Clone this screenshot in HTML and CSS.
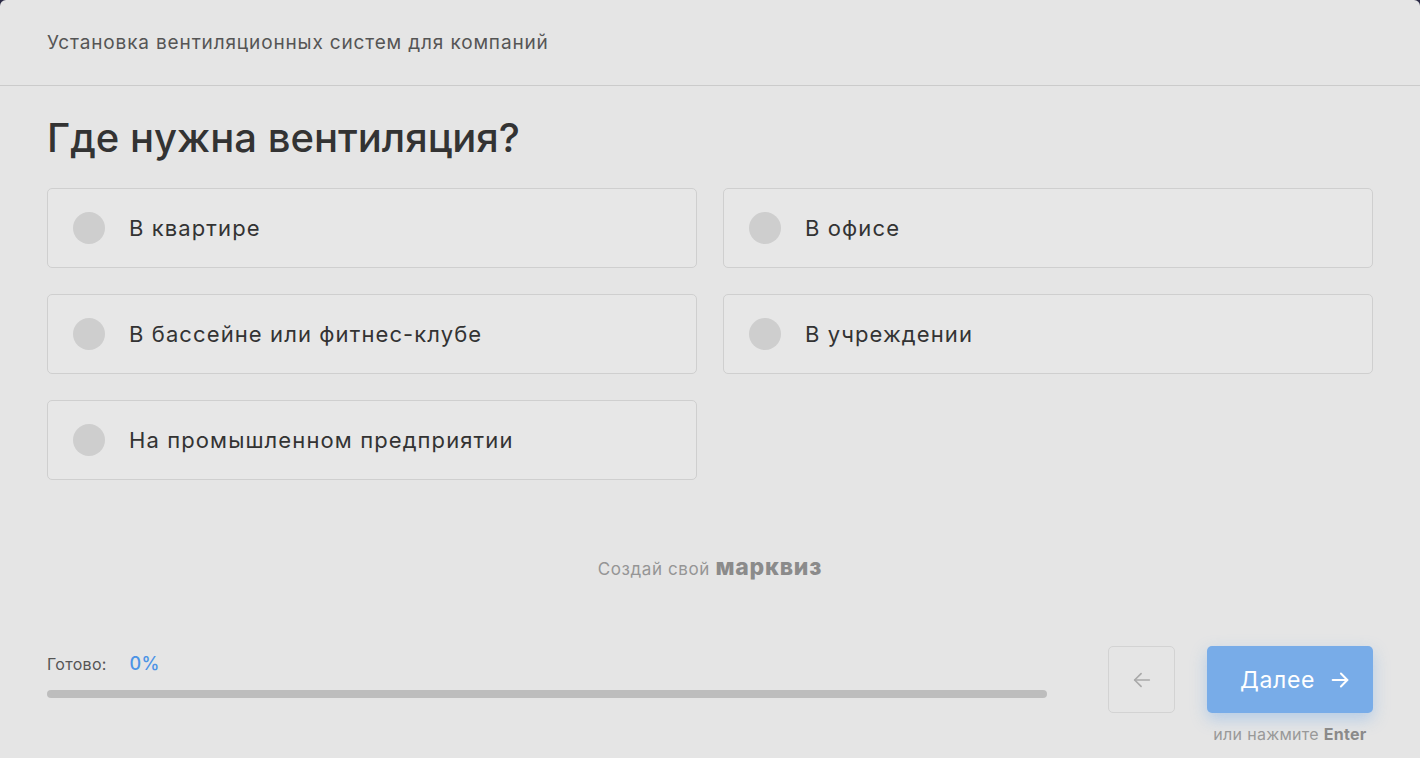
FILE: index.html
```html
<!DOCTYPE html>
<html lang="ru">
<head>
<meta charset="utf-8">
<title>Марквиз</title>
<link rel="stylesheet" href="styles.css">
</head>
<body>
<div class="quiz">
  <div class="quiz-head">Установка вентиляционных систем для компаний</div>

  <div class="quiz-body">
    <h1 class="quiz-title">Где нужна вентиляция?</h1>
    <div class="options">
      <label class="option"><span class="radio"></span>В квартире</label>
      <label class="option"><span class="radio"></span>В офисе</label>
      <label class="option"><span class="radio"></span>В бассейне или фитнес-клубе</label>
      <label class="option"><span class="radio"></span>В учреждении</label>
      <label class="option"><span class="radio"></span>На промышленном предприятии</label>
    </div>
  </div>

  <div class="brand">Создай свой <b>марквиз</b></div>

  <div class="quiz-foot">
    <div class="progress">
      <div class="progress-label">Готово: <span class="progress-value">0%</span></div>
      <div class="progress-bar"></div>
    </div>
    <div class="nav">
      <button class="btn-back">
        <svg width="22" height="22" viewBox="0 0 24 24" fill="none" stroke="#a9a9a9" stroke-width="1.8" stroke-linecap="round" stroke-linejoin="round"><path d="M20 12H4"/><path d="M11 5l-7 7 7 7"/></svg>
      </button>
      <div class="next-wrap">
        <button class="btn-next">Далее
          <svg width="22" height="22" viewBox="0 0 24 24" fill="none" stroke="#fff" stroke-width="2.2" stroke-linecap="round" stroke-linejoin="round"><path d="M4 12h16"/><path d="M13 5l7 7-7 7"/></svg>
        </button>
        <div class="hint">или нажмите <b>Enter</b></div>
      </div>
    </div>
  </div>
</div>
</body>
</html>
```

FILE: styles.css
```css
* {
  box-sizing: border-box;
  margin: 0;
  padding: 0;
}

body {
  background-color: #2b2a45;
  font-family: "Inter", "Noto Sans", sans-serif;
  color: #333;
}

.quiz {
  height: 100vh;
  background-color: #e5e5e5;
  border-radius: 6px 6px 0 0;
  display: flex;
  flex-direction: column;
}

.quiz-head {
  height: 86px;
  padding: 0 47px;
  display: flex;
  align-items: center;
  border-bottom: 1px solid #cbcbcb;
  font-size: 19px;
  letter-spacing: 0.85px;
  color: #555;
}

.quiz-body {
  padding: 27px 47px 0;
}

.quiz-title {
  font-size: 40px;
  font-weight: 500;
  line-height: 50px;
  color: #333;
}

.options {
  display: grid;
  grid-template-columns: 650px 650px;
  grid-auto-rows: 80px;
  column-gap: 26px;
  row-gap: 26px;
  margin-top: 25px;
}

.option {
  display: flex;
  align-items: center;
  padding-left: 25px;
  background-color: #e7e7e7;
  border: 1px solid #cfcfcf;
  border-radius: 5px;
  font-size: 22px;
  letter-spacing: 1.1px;
  color: #333;
}

.radio {
  width: 32px;
  height: 32px;
  border-radius: 50%;
  background-color: #cecece;
  margin-right: 24px;
}

.brand {
  text-align: center;
  margin-top: 73px;
  font-size: 17px;
  letter-spacing: 0.6px;
  color: #959595;
}

.brand b {
  font-size: 23px;
  font-weight: 800;
  letter-spacing: 0.8px;
  color: #8b8b8b;
}

.quiz-foot {
  margin-top: auto;
  padding: 0 47px 14px;
  display: flex;
  align-items: flex-start;
}

.progress {
  width: 1000px;
  padding-top: 7px;
}

.progress-label {
  font-size: 16px;
  letter-spacing: 0.3px;
  color: #555;
}

.progress-value {
  font-size: 18px;
  font-weight: 500;
  color: #4b93e6;
  margin-left: 18px;
}

.progress-bar {
  height: 8px;
  margin-top: 16px;
  border-radius: 4px;
  background-color: #bdbdbd;
}

.nav {
  margin-left: auto;
  display: flex;
  align-items: flex-start;
  gap: 32px;
}

.btn-back {
  width: 67px;
  height: 67px;
  border: 1px solid #d3d3d3;
  border-radius: 5px;
  background: transparent;
  display: flex;
  justify-content: center;
  align-items: center;
}

.next-wrap {
  display: flex;
  flex-direction: column;
  align-items: center;
}

.btn-next {
  width: 166px;
  height: 67px;
  padding-left: 11px;
  border: none;
  border-radius: 5px;
  background-color: #78ace8;
  box-shadow: 0 6px 16px rgba(120, 172, 232, 0.45);
  color: #fff;
  font-family: inherit;
  font-size: 23px;
  letter-spacing: 0.6px;
  display: flex;
  justify-content: center;
  align-items: center;
  gap: 14px;
}

.hint {
  margin-top: 11px;
  font-size: 16px;
  letter-spacing: 0.3px;
  color: #999;
}

.hint b {
  color: #8a8a8a;
}
```
